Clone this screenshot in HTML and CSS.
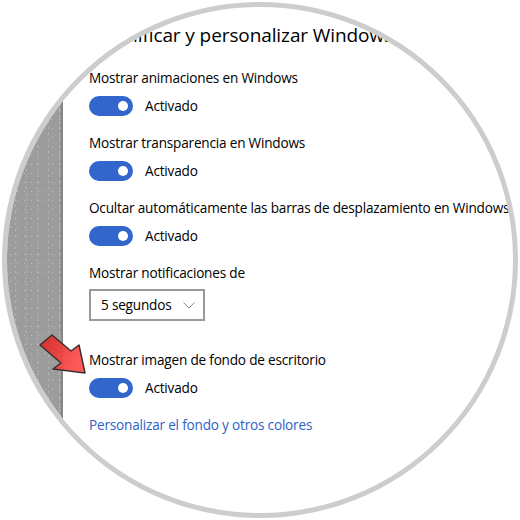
FILE: index.html
```html
<!DOCTYPE html>
<html lang="es">
<head>
    <meta charset="UTF-8">
    <title>Simplificar y personalizar Windows</title>
    <link rel="stylesheet" href="styles.css">
</head>
<body>
<div class="lens">
    <div class="sidebar"></div>
    <div class="content">
        <h1>Simplificar y personalizar Windows</h1>

        <div class="setting">
            <p class="label">Mostrar animaciones en Windows</p>
            <div class="switch-row"><span class="switch"></span>Activado</div>
        </div>
        <div class="setting">
            <p class="label">Mostrar transparencia en Windows</p>
            <div class="switch-row"><span class="switch"></span>Activado</div>
        </div>
        <div class="setting">
            <p class="label">Ocultar automáticamente las barras de desplazamiento en Windows</p>
            <div class="switch-row"><span class="switch"></span>Activado</div>
        </div>
        <div class="setting">
            <p class="label">Mostrar notificaciones de</p>
            <div class="select">
                5 segundos
                <svg class="chevron" width="12" height="7" viewBox="0 0 12 7"><polyline points="0.5,0.5 6,6 11.5,0.5" fill="none" stroke="#8a8a8a" stroke-width="1"/></svg>
            </div>
        </div>
        <div class="setting bg">
            <p class="label">Mostrar imagen de fondo de escritorio</p>
            <div class="switch-row"><span class="switch"></span>Activado</div>
        </div>
        <a class="link" href="#">Personalizar el fondo y otros colores</a>
    </div>

    <!--flecha roja encima-->
    <svg class="arrow" width="520" height="520" viewBox="0 0 520 520">
        <defs>
            <linearGradient id="red" x1="0" y1="0" x2="1" y2="0.4">
                <stop offset="0" stop-color="#d62a2a"/>
                <stop offset="1" stop-color="#ff5252"/>
            </linearGradient>
        </defs>
        <polygon points="40,345 52,335 71,351 79,345 85,373 53,369 61,363" fill="url(#red)" fill-opacity="0.95" stroke="#3b3030" stroke-width="1.5" stroke-linejoin="round"/>
    </svg>
</div>
</body>
</html>
```

FILE: styles.css
```css
* {
    margin: 0;
    padding: 0;
}

body {
    background: #fff;
    font-family: "Open Sans", "Noto Sans", sans-serif;
    color: #000;
}

.lens {
    position: relative;
    width: 506px;
    height: 506px;
    margin: 2px;
    border: 5px solid #cdcdcd;
    border-radius: 50%;
    overflow: hidden;
    display: flex;
    background: #fff;
}

.sidebar {
    width: 54px;
    flex: none;
    border-right: 2px solid #868686;
    background-color: #9c9c9c;
    background-image:
        radial-gradient(circle, rgba(255, 255, 255, .35) 0.6px, transparent 1px),
        radial-gradient(circle, rgba(255, 255, 255, .25) 0.5px, transparent 1px);
    background-size: 7px 9px, 11px 6px;
    background-position: 0 0, 3px 4px;
}

.content {
    flex: 1;
    padding: 14px 0 0 26px;
    white-space: nowrap;
    font-size: 13.6px;
    letter-spacing: -0.2px;
    line-height: 20px;
}

h1 {
    font-size: 19px;
    letter-spacing: -0.1px;
    line-height: 28px;
    font-weight: 400;
    margin-bottom: 19px;
}

.setting {
    margin-bottom: 17px;
}

.setting.bg {
    margin-top: 29px;
    margin-bottom: 17px;
}

.label {
    margin-bottom: 8px;
}

.switch-row {
    display: flex;
    align-items: center;
    height: 20px;
}

.switch {
    position: relative;
    width: 44px;
    height: 20px;
    border-radius: 10px;
    background: #3366cc;
    margin-right: 12px;
}

.switch::after {
    content: "";
    position: absolute;
    right: 5px;
    top: 5px;
    width: 10px;
    height: 10px;
    border-radius: 50%;
    background: #fff;
}

.select {
    display: flex;
    align-items: center;
    width: 116px;
    height: 32px;
    box-sizing: border-box;
    border: 2px solid #999;
    padding-left: 10px;
    margin-top: -2px;
}

.chevron {
    margin-left: auto;
    margin-right: 8px;
}

.link {
    display: block;
    color: #2e62c8;
    text-decoration: none;
}

.arrow {
    position: absolute;
    left: -7px;
    top: -7px;
    pointer-events: none;
}
```
